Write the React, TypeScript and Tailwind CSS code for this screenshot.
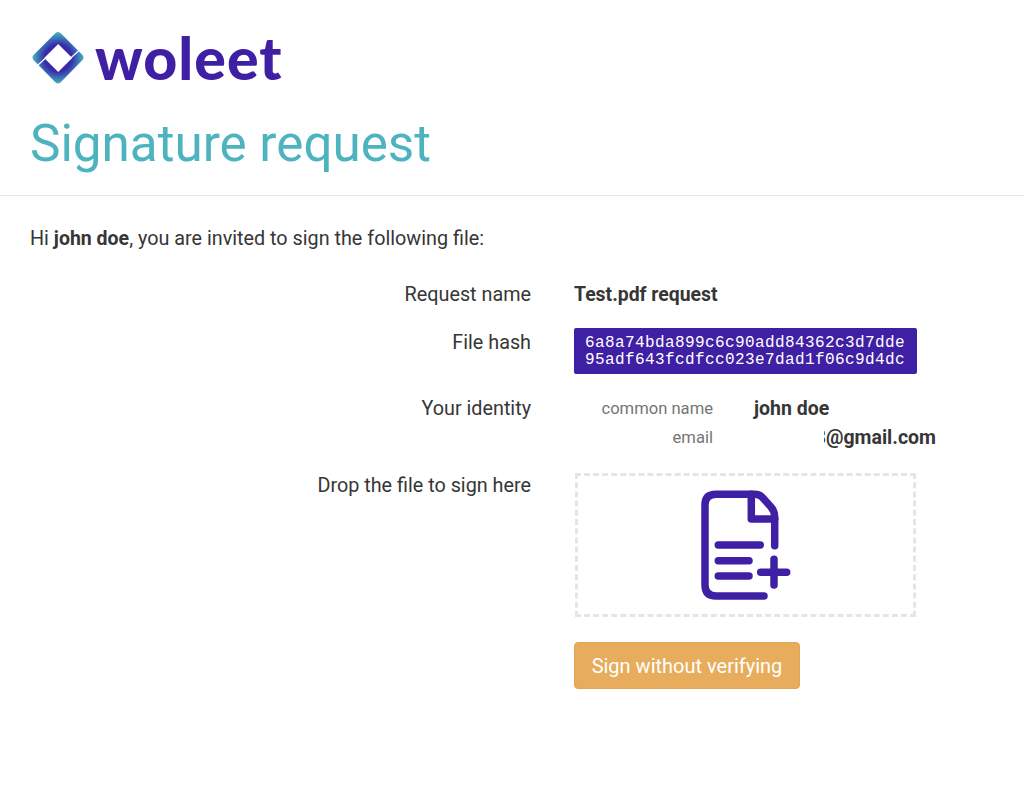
export default function App() {
  return (
    <div className="font-['Roboto',sans-serif] w-[1024px] h-[805px] bg-white text-[#363636] text-[19.8px] leading-[24px] overflow-hidden">
      <header className="h-[196px] border-b border-[#e8e8e8] pl-[30px] pt-[28px]">
        <div className="flex items-center h-[60px]">
          <svg width="56" height="60" viewBox="30 28 56 60" className="shrink-0">
            <defs>
              <radialGradient id="a" gradientUnits="userSpaceOnUse" cx="58.2" cy="58" r="27">
                <stop offset="0.5" stopColor="#3a2aa8" />
                <stop offset="0.75" stopColor="#3b78b8" />
                <stop offset="1" stopColor="#4fc0c0" />
              </radialGradient>
            </defs>
            <path d="M33.5 55 L55.5 33 Q58 31 60.5 33 L82.5 55 Q84.5 57.5 82.5 60 L60.5 82.5 Q58 84.5 55.5 82.5 L33.5 60 Q31.5 57.5 33.5 55 Z" fill="url(#a)" />
            <path d="M58.2 44 L72.2 58 L58.2 72 L44.2 58 Z" fill="#ffffff" />
            <path d="M71 57.7 L79 50.5 M45.4 58.3 L37.4 65.5" stroke="#ffffff" strokeWidth="1.2" fill="none" />
          </svg>
          <span className="ml-[9px] font-['Lato',sans-serif] font-black text-[#3f20a5] text-[59px] leading-[60px] tracking-[1px]">woleet</span>
        </div>
        <h1 className="mt-[26px] text-[51.2px] leading-[60px] text-[#4db3bf] font-normal">Signature request</h1>
      </header>
      <p className="ml-[30px] mt-[31px]">
        Hi <b className="font-bold text-[19.5px]">john doe</b>, you are invited to sign the following file:
      </p>
      <div className="mt-[32px] grid grid-cols-[531px_1fr] gap-x-[43px]">
        <div className="text-right">Request name</div>
        <div className="font-bold text-[19.4px]">Test.pdf request</div>

        <div className="text-right mt-[24px]">File hash</div>
        <div className="mt-[21px] w-[343px] h-[46px] rounded-[2px] bg-[#3f20a5] text-white font-['Liberation_Mono',monospace] text-[16px] tracking-[0.4px] leading-[17px] pl-[11px] pt-[7px]">
          6a8a74bda899c6c90add84362c3d7dde<br />95adf643fcdfcc023e7dad1f06c9d4dc
        </div>

        <div className="text-right mt-[23px]">Your identity</div>
        <div className="mt-[23px]">
          <div className="-ml-[574px] pl-[574px] grid grid-cols-[139px_1fr] gap-x-[41px]">
            <div className="text-right text-[16.6px] text-[#757575]">common name</div>
            <div className="font-bold text-[19.5px]">john doe</div>
            <div className="text-right text-[16.6px] text-[#757575] mt-[5px]">email</div>
            <div className="font-bold text-[19.5px] mt-[5px] flex">
              <span className="ml-[70px] w-[2px] overflow-hidden flex justify-end">8</span>
              <span>@gmail.com</span>
            </div>
          </div>
        </div>

        <div className="text-right mt-[24px]">Drop the file to sign here</div>
        <div className="mt-[23px]">
          <div className="ml-[1px] w-[341px] h-[144px] border-[3px] border-dashed border-[#e5e5e5] flex items-center justify-center">
            <svg width="100" height="138" viewBox="697 476 100 138" fill="none" stroke="#3f20a5" strokeWidth="7.5" strokeLinecap="round" strokeLinejoin="round">
              <path d="M765 596 H717 Q706 596 706 585 V505 Q706 494.3 717 494.3 H756 Q760 494.3 763 497 L772 507 Q775.7 511 775.7 517 V545.7" />
              <path d="M752.3 494.3 V519 H775.7" />
              <path d="M719.3 545 H761.3 M719.3 560.7 H750 M719.3 576 H750 M761.7 572.3 H787.7 M775 559.3 V585" />
            </svg>
          </div>
          <button className="mt-[25px] block w-[226px] h-[47px] rounded-[4px] bg-[#e8ad5c] border border-[#e3a651] text-white text-[20px]">
            Sign without verifying
          </button>
        </div>
      </div>
    </div>
  );
}
